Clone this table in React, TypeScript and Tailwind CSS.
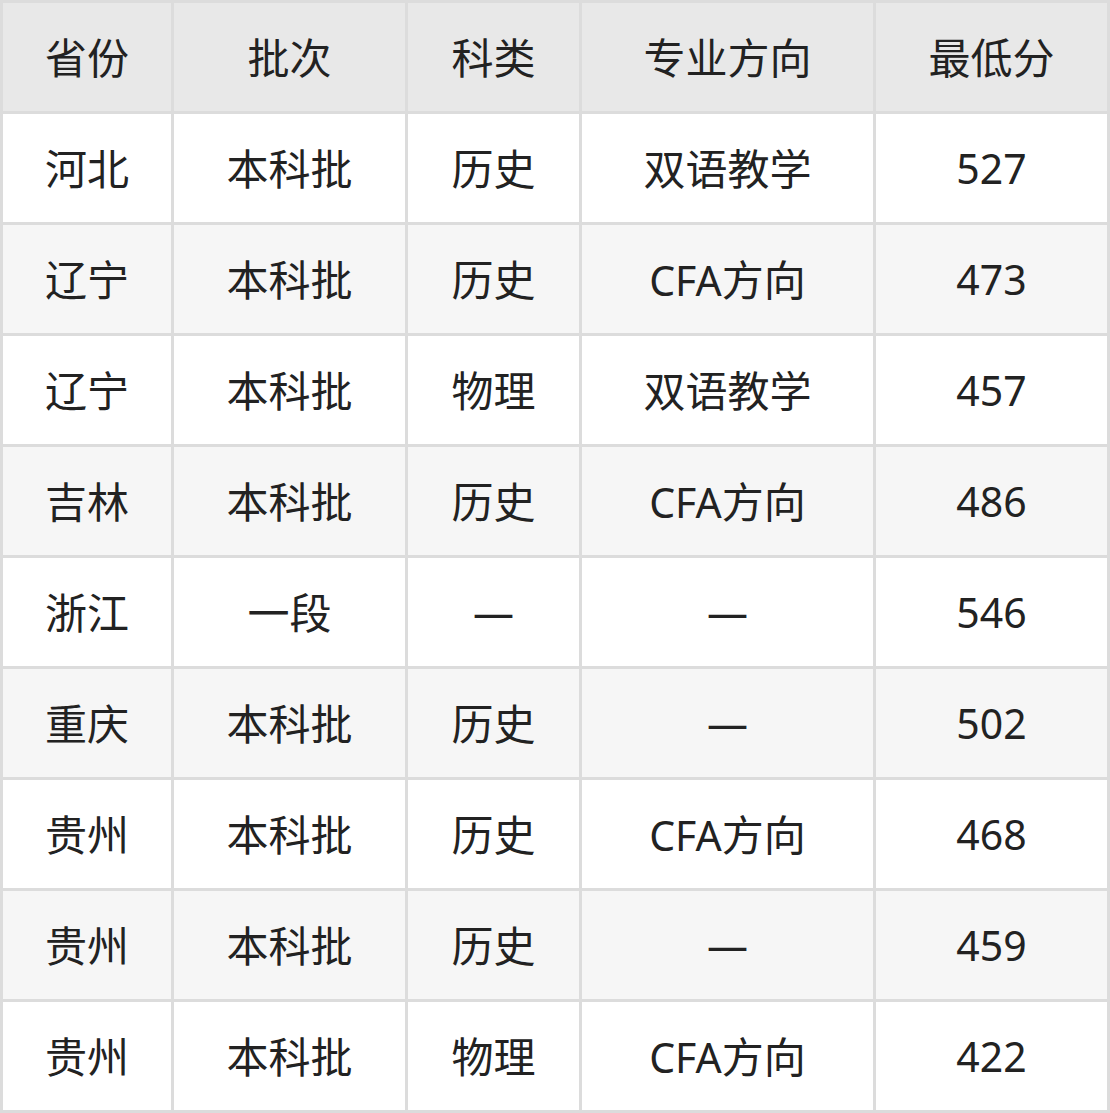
import React from "react";

const header = ["省份", "批次", "科类", "专业方向", "最低分"];
const rows: string[][] = [
  ["河北", "本科批", "历史", "双语教学", "527"],
  ["辽宁", "本科批", "历史", "CFA方向", "473"],
  ["辽宁", "本科批", "物理", "双语教学", "457"],
  ["吉林", "本科批", "历史", "CFA方向", "486"],
  ["浙江", "一段", "—", "—", "546"],
  ["重庆", "本科批", "历史", "—", "502"],
  ["贵州", "本科批", "历史", "CFA方向", "468"],
  ["贵州", "本科批", "历史", "—", "459"],
  ["贵州", "本科批", "物理", "CFA方向", "422"],
];

function Text({ s }: { s: string }) {
  const parts = s.match(/[\u4e00-\u9fff]+|[^\u4e00-\u9fff]+/g) || [];
  return (
    <span className="leading-none">
      {parts.map((p, i) =>
        /[\u4e00-\u9fff]/.test(p) ? (
          <span
            key={i}
            className="text-[42px] leading-none"
            style={{ fontFamily: '"Noto Sans CJK SC", sans-serif' }}
          >
            {p}
          </span>
        ) : (
          <span
            key={i}
            className="text-[41px] leading-none"
            style={{ fontFamily: '"Noto Sans", sans-serif' }}
          >
            {p}
          </span>
        )
      )}
    </span>
  );
}

export default function App() {
  return (
    <div
      className="w-[1110px] h-[1113px] bg-[#dcdcdc] p-[3px] grid grid-cols-[168px_231px_171px_291px_231px] auto-rows-[108px] gap-[3px] text-[#222222] text-[41px] leading-none"
      style={{ fontFamily: '"Noto Sans", sans-serif' }}
    >
      {header.map((h) => (
        <div key={h} className="bg-[#e8e8e8] flex items-center justify-center">
          <Text s={h} />
        </div>
      ))}
      {rows.map((r, i) =>
        r.map((c, j) => (
          <div
            key={`${i}-${j}`}
            className={`${i % 2 === 0 ? "bg-white" : "bg-[#f6f6f6]"} flex items-center justify-center`}
          >
            <Text s={c} />
          </div>
        ))
      )}
    </div>
  );
}
